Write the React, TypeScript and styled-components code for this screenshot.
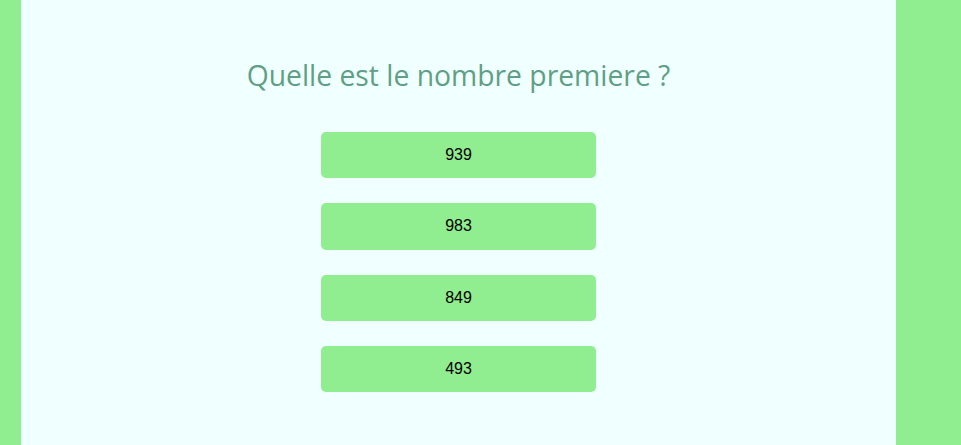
import React from "react";
import styled, { createGlobalStyle } from "styled-components";

const Global = createGlobalStyle`
  html, body { margin: 0; padding: 0; background: #90ee90; }
  body { min-height: 100vh; }
`;

const Panel = styled.main`
  margin-left: 21px;
  width: 875px;
  min-height: 100vh;
  background: #f0ffff;
  display: flex;
  flex-direction: column;
  align-items: center;
  padding-top: 56px;
  box-sizing: border-box;
`;

const Title = styled.h1`
  margin: 0 0 38px;
  font-family: "Open Sans", "Noto Sans", sans-serif;
  font-weight: 400;
  font-size: 28.3px;
  line-height: 38px;
  color: #5f9f84;
`;

const Answers = styled.div`
  display: flex;
  flex-direction: column;
  gap: 25px;
`;

const Answer = styled.button`
  width: 275px;
  height: 46.3px;
  border: none;
  border-radius: 5px;
  background: #90ee90;
  color: #000;
  font-family: "Liberation Sans", Arial, sans-serif;
  font-size: 16px;
  cursor: pointer;
`;

const options = ["939", "983", "849", "493"];

export default function App() {
  return (
    <>
      <Global />
      <Panel>
        <Title>Quelle est le nombre premiere ?</Title>
        <Answers>
          {options.map((o) => (
            <Answer key={o}>{o}</Answer>
          ))}
        </Answers>
      </Panel>
    </>
  );
}
